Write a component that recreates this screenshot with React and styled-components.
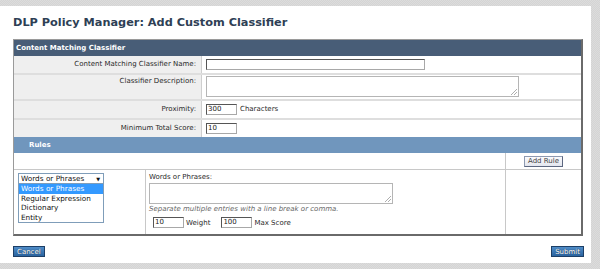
import React from "react";
import styled, { createGlobalStyle } from "styled-components";

const Global = createGlobalStyle`
  html, body { margin: 0; padding: 0; }
  body {
    width: 600px; height: 269px; overflow: hidden;
    background-color: #dcdcdc;
    background-image:
      linear-gradient(45deg, #d4d4d4 25%, transparent 25%, transparent 75%, #d4d4d4 75%),
      linear-gradient(45deg, #d4d4d4 25%, transparent 25%, transparent 75%, #d4d4d4 75%);
    background-size: 2px 2px;
    background-position: 0 0, 1px 1px;
    font-family: "DejaVu Sans", Verdana, sans-serif;
  }
`;

const Page = styled.div`
  margin: 6px 9px 0 0;
  height: 257px;
  background: #fff;
  padding: 0 8px 0 13px;
  box-sizing: border-box;
  display: flex;
  flex-direction: column;
`;

const Title = styled.h1`
  margin: 0;
  height: 33px;
  display: flex;
  align-items: center;
  font-family: "DejaVu Sans", Verdana, sans-serif;
  font-size: 11.3px;
  font-weight: bold;
  color: #2e3f55;
`;

const Panel = styled.div`
  border: 1px solid #9a9a9a;
  border-right: 2px solid #6a6a6a;
  border-bottom: 2px solid #6a6a6a;
  font-size: 7px;
  color: #2a2a2a;
`;

const Head = styled.div`
  height: 16px;
  display: flex;
  align-items: center;
  padding-left: ${(p) => (p.$indent ? "15px" : "2px")};
  background: ${(p) => (p.$light ? "#7096bd" : "#485d77")};
  color: #fff;
  font-weight: bold;
  font-size: 7px;
`;

const FormRow = styled.div`
  display: grid;
  grid-template-columns: 188px 1fr;
  height: ${(p) => p.$h}px;
  border-top: ${(p) => (p.$first ? "none" : "2px solid #dedede")};
`;

const Label = styled.div`
  background: #efefef;
  border-right: 1px solid #cfcfcf;
  text-align: right;
  padding: ${(p) => p.$pt || 4}px 5px 0 0;
  line-height: 9px;
`;

const Value = styled.div`
  display: flex;
  align-items: flex-start;
  gap: 3px;
  padding: ${(p) => p.$pad || "3px 0 0 4px"};
`;

const TextInput = styled.div`
  width: ${(p) => p.$w}px;
  height: 11px;
  box-sizing: border-box;
  border: 1px solid #a8a8a8;
  border-top-color: #555;
  border-left-color: #555;
  background: #fff;
  font-size: 7px;
  line-height: 9px;
  padding-left: 1px;
  color: #222;
`;

const TextArea = styled.div`
  position: relative;
  width: ${(p) => p.$w}px;
  height: ${(p) => p.$h}px;
  box-sizing: border-box;
  border: 1px solid #b5b5b5;
  background: #fff;
  margin-top: ${(p) => p.$mt || 0}px;
`;

const Grip = styled.svg`
  position: absolute;
  right: 1px;
  bottom: 1px;
`;

const Unit = styled.span`
  line-height: 11px;
`;

const BlankRow = styled.div`
  display: grid;
  grid-template-columns: 1fr 76px;
  height: 16px;
  border-bottom: 1px solid #c8c8c8;
`;

const RightCell = styled.div`
  border-left: 1px solid #c8c8c8;
  display: flex;
  justify-content: center;
  align-items: center;
`;

const SmallBtn = styled.button`
  font-family: "DejaVu Sans", Verdana, sans-serif;
  font-size: 7px;
  color: #444;
  height: 11px;
  padding: 0 3px;
  border: 1px solid #8d99b0;
  border-right-color: #5c6780;
  border-bottom-color: #5c6780;
  background: linear-gradient(#fbfbfd, #e3e6ee);
  line-height: 8px;
  border-radius: 0;
`;

const RuleRow = styled.div`
  display: grid;
  grid-template-columns: 131px 1fr 76px;
  height: 64px;
`;

const RuleCell = styled.div`
  border-left: ${(p) => (p.$first ? "none" : "1px solid #c8c8c8")};
  padding: ${(p) => p.$pad || "0"};
  display: flex;
  flex-direction: column;
`;

const Select = styled.div`
  width: 86px;
  height: 11px;
  box-sizing: border-box;
  border: 1px solid #7f9db9;
  display: flex;
  align-items: center;
  justify-content: space-between;
  padding: 0 3px 0 2px;
  line-height: 8px;
  color: #111;
  font-size: 7.3px;
`;

const Arrow = styled.span`
  font-size: 5px;
`;

const Options = styled.div`
  width: 86px;
  box-sizing: border-box;
  border: 1px solid #7f9db9;
  border-top: none;
  color: #111;
  font-size: 7.3px;
`;

const Option = styled.div`
  height: 9.5px;
  line-height: 9.5px;
  padding-left: 2px;
  background: ${(p) => (p.$sel ? "#3399ff" : "#fff")};
  color: ${(p) => (p.$sel ? "#fff" : "#111")};
`;

const FieldLabel = styled.div`
  line-height: 9px;
`;

const Help = styled.div`
  font-style: italic;
  color: #666;
  margin-top: 1px;
  line-height: 9px;
`;

const ScoreRow = styled.div`
  display: flex;
  align-items: center;
  gap: 2px;
  margin: 3px 0 0 4px;
`;

const ScoreText = styled.span`
  margin-right: 9px;
`;

const Footer = styled.div`
  display: flex;
  justify-content: space-between;
  margin: 10px -1px 0 0;
`;

const BlueBtn = styled.button`
  font-family: "DejaVu Sans", Verdana, sans-serif;
  font-size: 7px;
  color: #fff;
  height: 11px;
  padding: 0 3px;
  border: 1px solid #1d3f66;
  background: linear-gradient(#4f8cc8, #2a64a0);
  line-height: 8px;
  border-radius: 0;
  text-shadow: 0 0 1px #123;
`;

const ResizeGrip = () => (
  <Grip width="6" height="6" viewBox="0 0 6 6">
    <path d="M6 0 L0 6 M6 3 L3 6" stroke="#999" strokeWidth="0.8" />
  </Grip>
);

export default function App() {
  return (
    <>
      <Global />
      <Page>
        <Title>DLP Policy Manager: Add Custom Classifier</Title>
        <Panel>
          <Head>Content Matching Classifier</Head>
          <FormRow $h={17} $first>
            <Label>Content Matching Classifier Name:</Label>
            <Value>
              <TextInput $w={219} />
            </Value>
          </FormRow>
          <FormRow $h={24}>
            <Label $pt={2}>Classifier Description:</Label>
            <Value $pad="1px 0 0 4px">
              <TextArea $w={313} $h={21}>
                <ResizeGrip />
              </TextArea>
            </Value>
          </FormRow>
          <FormRow $h={17}>
            <Label>Proximity:</Label>
            <Value>
              <TextInput $w={31}>300</TextInput>
              <Unit>Characters</Unit>
            </Value>
          </FormRow>
          <FormRow $h={17}>
            <Label>Minimum Total Score:</Label>
            <Value>
              <TextInput $w={31}>10</TextInput>
            </Value>
          </FormRow>
          <Head $light $indent>Rules</Head>
          <BlankRow>
            <div />
            <RightCell>
              <SmallBtn>Add Rule</SmallBtn>
            </RightCell>
          </BlankRow>
          <RuleRow>
            <RuleCell $first $pad="3px 0 0 4px">
              <Select>
                <span>Words or Phrases</span>
                <Arrow>▼</Arrow>
              </Select>
              <Options>
                <Option $sel>Words or Phrases</Option>
                <Option>Regular Expression</Option>
                <Option>Dictionary</Option>
                <Option>Entity</Option>
              </Options>
            </RuleCell>
            <RuleCell $pad="3px 0 0 3px">
              <FieldLabel>Words or Phrases:</FieldLabel>
              <TextArea $w={244} $h={21} $mt={1}>
                <ResizeGrip />
              </TextArea>
              <Help>Separate multiple entries with a line break or comma.</Help>
              <ScoreRow>
                <TextInput $w={31}>10</TextInput>
                <ScoreText>Weight</ScoreText>
                <TextInput $w={31}>100</TextInput>
                <span>Max Score</span>
              </ScoreRow>
            </RuleCell>
            <RuleCell />
          </RuleRow>
        </Panel>
        <Footer>
          <BlueBtn>Cancel</BlueBtn>
          <BlueBtn>Submit</BlueBtn>
        </Footer>
      </Page>
    </>
  );
}
